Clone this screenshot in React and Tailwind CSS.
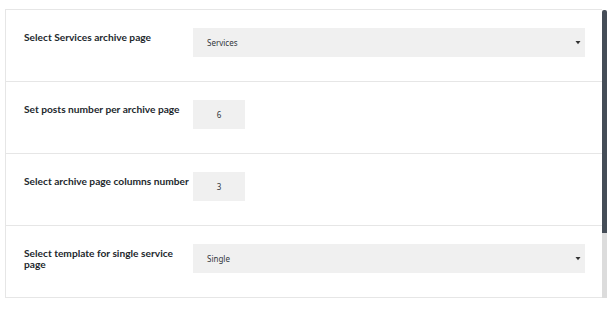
import React from "react";

function Arrow() {
  return (
    <svg width="6" height="5" viewBox="0 0 6 5" className="shrink-0">
      <path d="M0.5 1 H5.5 L3 4.2 Z" fill="#333" />
    </svg>
  );
}

function Row({ label, children }) {
  return (
    <div className="flex h-[72px] items-start border-b border-[#e6e6e6] pt-[18px] pl-[18px]">
      <div className="w-[169px] pt-[4px] pr-1 font-['Lato',sans-serif] text-[10.2px] leading-[11px] font-bold text-[#23282d]">
        {label}
      </div>
      {children}
    </div>
  );
}

export default function App() {
  return (
    <div className="h-[317px] w-[614px] bg-white pt-[9px] pl-[5px]" style={{ fontFamily: "'Noto Sans', 'Open Sans', sans-serif" }}>
      <div className="flex w-[602px]">
        <div className="flex-1 border-l border-t border-[#e6e6e6]">
          <Row label="Select Services archive page">
            <div className="flex h-[29px] w-[392px] items-center justify-between bg-[#f0f0f0] pl-[14px] pr-[4px] text-[8px] text-[#32373c]">
              <span>Services</span>
              <Arrow />
            </div>
          </Row>
          <Row label="Set posts number per archive page">
            <div className="flex h-[29px] w-[52px] items-center justify-center bg-[#f0f0f0] text-[8px] text-[#32373c]">
              6
            </div>
          </Row>
          <Row label="Select archive page columns number">
            <div className="flex h-[29px] w-[52px] items-center justify-center bg-[#f0f0f0] text-[8px] text-[#32373c]">
              3
            </div>
          </Row>
          <Row label="Select template for single service page">
            <div className="flex h-[29px] w-[392px] items-center justify-between bg-[#f0f0f0] pl-[14px] pr-[4px] text-[8px] text-[#32373c]">
              <span>Single</span>
              <Arrow />
            </div>
          </Row>
        </div>
        <div className="flex w-[5px] flex-col pt-[1px]">
          <div className="h-[223px] rounded-t-[2px] bg-[#454d57]" />
          <div className="flex-1 bg-[#dcdcdc]" />
        </div>
      </div>
    </div>
  );
}
